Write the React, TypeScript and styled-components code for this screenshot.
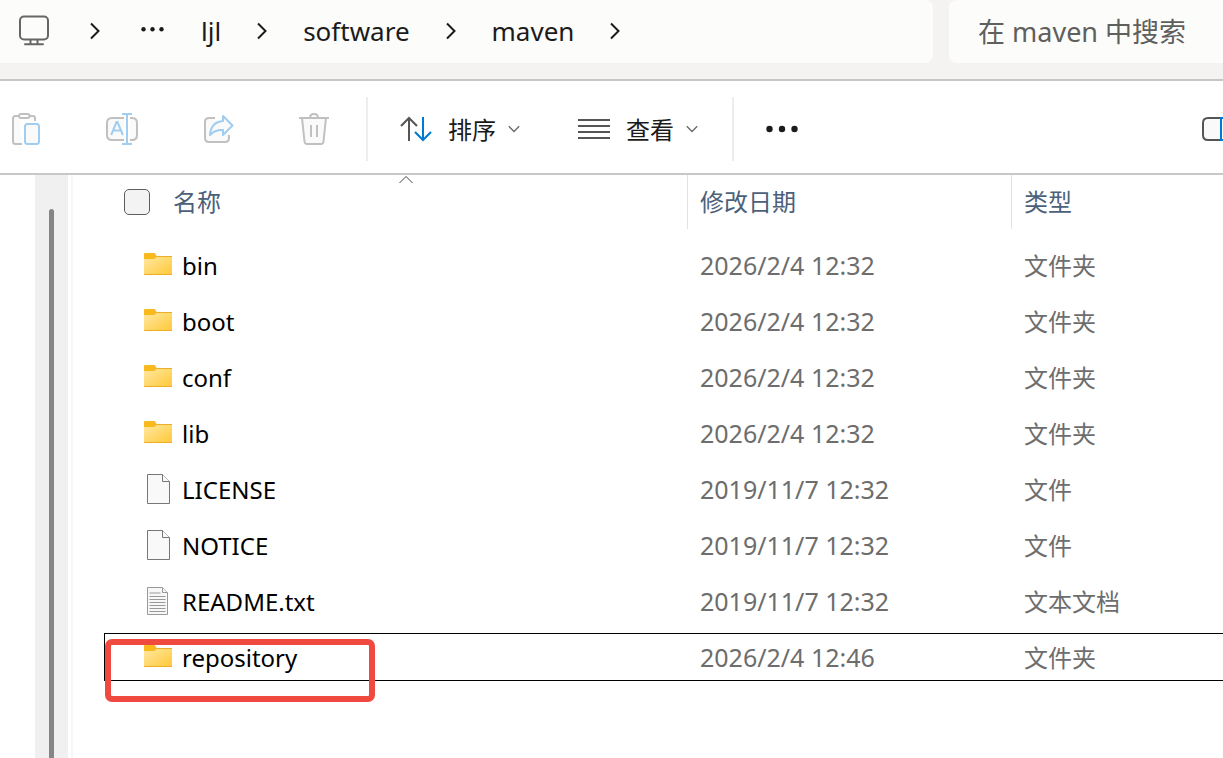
import React from "react";
import styled, { createGlobalStyle } from "styled-components";

const GlobalStyle = createGlobalStyle`
  *, *::before, *::after { box-sizing: border-box; }
  body {
    margin: 0;
    background: #fff;
    overflow: hidden;
    font-family: "Noto Sans", "Noto Sans CJK SC", sans-serif;
    color: #1b1b1b;
  }
`;

const Window = styled.div`
  min-height: 100vh;
  display: flex;
  flex-direction: column;
  overflow: hidden;
`;

const AddressRow = styled.header`
  display: flex;
  gap: 16px;
  padding-bottom: 16px;
  background: #f4f3f2;
  border-bottom: 2px solid #c8c6c5;
`;

const Breadcrumbs = styled.nav`
  flex: 1;
  height: 63px;
  display: flex;
  align-items: center;
  gap: 36px;
  padding: 0 0 2px 18px;
  background: #fcfcfa;
  border-radius: 0 8px 8px 0;
  svg { display: block; flex: none; }
`;

const Crumb = styled.a`
  font-size: 26px;
  line-height: 36px;
  color: #1b1b1b;
  text-decoration: none;
`;

const CrumbButton = styled.button<{ $left?: number; $right?: number }>`
  border: 0;
  background: none;
  padding: 0 ${(p) => p.$right ?? 0}px 0 ${(p) => p.$left ?? 0}px;
`;

const SearchBox = styled.input`
  width: 274px;
  height: 63px;
  padding: 0 0 0 29px;
  border: 0;
  border-radius: 8px 0 0 8px;
  background: #fcfcfa;
  font: inherit;
  font-size: 27px;
  outline: none;
  &::placeholder { color: #5f5f5e; opacity: 1; }
`;

const Toolbar = styled.div`
  display: flex;
  align-items: center;
  padding: 16px 0 12px 10px;
  border-bottom: 2px solid #c8c8c8;
`;

const ToolGroup = styled.div<{ $gap: number; $end?: number }>`
  display: flex;
  align-items: center;
  gap: ${(p) => p.$gap}px;
  padding-right: ${(p) => p.$end ?? 0}px;
`;

const ToolButton = styled.button`
  display: flex;
  align-items: center;
  padding: 0;
  border: 0;
  background: none;
  font: inherit;
  font-size: 24px;
  line-height: 32px;
  color: #1b1b1b;
  svg { display: block; }
`;

const ToolLabel = styled.span`
  padding: 2px 12px 0 16px;
`;

const Divider = styled.div`
  width: 2px;
  height: 64px;
  margin: 0 32px 0 34px;
  background: #ededed;
`;

const Spacer = styled.div`
  flex: 1;
`;

const Body = styled.main`
  flex: 1;
  display: flex;
`;

const ScrollTrack = styled.div`
  width: 33px;
  margin: 0 3px 0 35px;
  padding: 34px 14px 0;
  display: flex;
  background: #f0f0f0;
`;

const ScrollThumb = styled.div`
  width: 5px;
  border-radius: 3px 3px 0 0;
  background: #858585;
`;

const ListPane = styled.section`
  flex: 1;
  padding-left: 31px;
  border-left: 2px solid #f7f7f7;
`;

const FileTable = styled.table`
  display: block;
  thead { display: block; }
`;

const FileRows = styled.tbody`
  display: flex;
  flex-direction: column;
  gap: 8px;
  padding-top: 12px;
`;

const HeadRow = styled.tr`
  display: grid;
  grid-template-columns: 583px 324px 1fr;
  height: 54px;
`;

const HeadCell = styled.th<{ $first?: boolean }>`
  position: relative;
  display: flex;
  align-items: center;
  gap: 23px;
  padding: 0 0 0 ${(p) => (p.$first ? 20 : 12)}px;
  border-left: ${(p) => (p.$first ? "0" : "1px solid #e2e2e2")};
  font-size: 24px;
  font-weight: 400;
  line-height: 32px;
  color: #4c607a;
`;

const SortCaret = styled.svg`
  position: absolute;
  top: 0;
  left: calc(50% + 2px);
`;

const SelectAll = styled.input`
  appearance: none;
  width: 26px;
  height: 26px;
  margin: 0;
  border: 1px solid #5e5e5e;
  border-radius: 5px;
  background: #f3f3f3;
`;

const FileRow = styled.tr<{ $focused?: boolean }>`
  display: grid;
  grid-template-columns: 582px 324px 1fr;
  height: 48px;
  border: 1px solid ${(p) => (p.$focused ? "#000" : "transparent")};
  border-right: 0;
`;

const NameCell = styled.td`
  position: relative;
  display: flex;
  align-items: center;
  gap: 10px;
  padding: 0 0 0 39px;
  font-size: 24px;
  line-height: 32px;
  color: #000;
  svg { display: block; flex: none; }
`;

const FileName = styled.span`
  padding-top: 2px;
`;

const DateCell = styled.td`
  display: flex;
  align-items: center;
  padding: 0 0 0 13px;
  font-size: 25px;
  line-height: 32px;
  color: #6d6d6d;
`;

const TypeCell = styled(DateCell)`
  padding-top: 2px;
  font-size: 24px;
`;

const Highlight = styled.div`
  position: absolute;
  top: 5px;
  left: 0;
  width: 270px;
  height: 63px;
  border: 6px solid #f04a40;
  border-radius: 7px;
`;

const CrumbChevron = () => (
  <svg width="10" height="18" viewBox="0 0 10 18" fill="none" stroke="#1b1b1b" strokeWidth="2">
    <path d="M1 1.5 8.5 9 1 16.5" />
  </svg>
);

const DropChevron = () => (
  <svg width="12" height="8" viewBox="0 0 12 8" fill="none" stroke="#6a6a6a" strokeWidth="1.4">
    <path d="M.8 1.2 6 6.4l5.200-5.200" />
  </svg>
);

const MonitorIcon = () => (
  <svg width="32" height="32" viewBox="0 0 32 32" fill="none" stroke="#666" strokeWidth="2">
    <rect x="2" y="1.500" width="28" height="23" rx="4" />
    <path d="M12.500 25v4M19.500 25v4M7 29.200h18" strokeLinecap="round" />
  </svg>
);

const PathDots = () => (
  <svg width="24" height="8" viewBox="0 0 24 8" fill="#1b1b1b">
    <circle cx="2.500" cy="2.200" r="2.200" />
    <circle cx="11.500" cy="2.200" r="2.200" />
    <circle cx="20.500" cy="2.200" r="2.200" />
  </svg>
);

const PasteIcon = () => (
  <svg width="32" height="32" viewBox="0 0 32 32" fill="none" stroke="#c0c0c0" strokeWidth="2">
    <path d="M9 3H5.500Q3 3 3 5.500v23Q3 31 5.500 31H12M19 3h4q2 0 2 2v3" fill="#fafafa" />
    <rect x="9" y="1" width="10.500" height="4" rx="2" fill="#fff" />
    <rect x="15" y="11" width="14" height="20" rx="2.500" stroke="#a0cdf0" fill="#fafafa" />
  </svg>
);

const RenameIcon = () => (
  <svg width="32" height="32" viewBox="0 0 32 32" fill="none" stroke="#c0c0c0" strokeWidth="2">
    <path d="M18 5H6Q1 5 1 10v12q0 5 5 5h12" fill="#fafafa" />
    <path d="M24 5h2q5 0 5 5v12q0 5-5 5h-2" fill="#fafafa" />
    <path d="M16 1h10M16 31h10M21 1v30M5.200 22 10.500 9h1l5.300 13M7 17.500h8" stroke="#a0cdf0" />
  </svg>
);

const ShareIcon = () => (
  <svg width="32" height="32" viewBox="0 0 32 32" fill="none" stroke="#c0c0c0" strokeWidth="2" strokeLinejoin="round">
    <path d="M13 5H7Q3 5 3 9v16q0 4 4 4h16q4 0 4-4v-3" fill="#fafafa" />
    <path d="M21 3l9.500 9.500L21 22v-5q-8-.5-13 5Q9 9 21 8z" stroke="#a0cdf0" fill="#fafafa" />
  </svg>
);

const DeleteIcon = () => (
  <svg width="32" height="32" viewBox="0 0 32 32" fill="none" stroke="#c0c0c0" strokeWidth="2">
    <path d="M4 5l2.500 23.500Q6.800 31 9 31h14q2.200 0 2.500-2.500L28 5" fill="#fafafa" />
    <path d="M1 5h30M12 5q0-4 4-4t4 4M13 12v12M19 12v12" />
  </svg>
);

const SortIcon = () => (
  <svg width="32" height="32" viewBox="0 0 32 32" fill="none" strokeWidth="2">
    <path d="M9 28V5M1 13l8-8 8 8" stroke="#555" />
    <path d="M23 4v23M15 19l8 8 8-8" stroke="#0078d4" />
  </svg>
);

const ViewIcon = () => (
  <svg width="32" height="32" viewBox="0 0 32 32" stroke="#555" strokeWidth="2">
    <path d="M0 7h32M0 13h32M0 19h32M0 25h32" />
  </svg>
);

const MoreIcon = () => (
  <svg width="32" height="32" viewBox="0 0 32 32" fill="#1b1b1b">
    <circle cx="3.500" cy="16" r="3.200" />
    <circle cx="16" cy="16" r="3.200" />
    <circle cx="28.500" cy="16" r="3.200" />
  </svg>
);

const PreviewIcon = () => (
  <svg width="21" height="32" viewBox="0 0 21 32" fill="#fafafa" strokeWidth="2">
    <path d="M19 5H6Q1 5 1 10v12q0 5 5 5h13" stroke="#555" />
    <path d="M24 5h-5v22h5" stroke="#0078d4" />
  </svg>
);

const FolderIcon = () => (
  <svg width="28" height="24" viewBox="0 0 28 24">
    <defs>
      <linearGradient id="folder" x1="0" y1="0" x2="1" y2="1">
        <stop offset="0" stopColor="#ffe8a0" />
        <stop offset="1" stopColor="#ffc838" />
      </linearGradient>
    </defs>
    <path d="M0 1Q0 0 1 0h9q1 0 1.500 1l1 2H27q1 0 1 1v3H0z" fill="#f9b81c" />
    <path d="M0 6h10q1 0 1.500-1l.5-1h16v17q0 1-1 1H1q-1 0-1-1z" fill="url(#folder)" />
    <path d="M0 21.500h28M12 3.500h16" stroke="#eaae28" />
  </svg>
);

const FileIcon = () => (
  <svg width="28" height="32" viewBox="0 0 28 32" fill="#f9f9f9" stroke="#777">
    <path d="M3.500 1.500h15l7 7v22h-22z" />
    <path d="M18.500 1.500v7h7" />
  </svg>
);

const TextIcon = () => (
  <svg width="28" height="32" viewBox="0 0 28 32" fill="#f7f7f7" stroke="#999">
    <path d="M3.500 2.500h15l5 5v22h-20z" />
    <path d="M18.500 2.500v5h5M5.500 8h11M5.500 11.500h16M5.500 14.500h16M5.500 17.500h16M5.500 20.500h16M5.500 23.500h16M5.500 26.500h16" />
  </svg>
);

const icons = { folder: FolderIcon, file: FileIcon, text: TextIcon };

type Entry = { name: string; date: string; type: string; icon: keyof typeof icons; focused?: boolean };

const entries: Entry[] = [
  { name: "bin", date: "2026/2/4 12:32", type: "文件夹", icon: "folder" },
  { name: "boot", date: "2026/2/4 12:32", type: "文件夹", icon: "folder" },
  { name: "conf", date: "2026/2/4 12:32", type: "文件夹", icon: "folder" },
  { name: "lib", date: "2026/2/4 12:32", type: "文件夹", icon: "folder" },
  { name: "LICENSE", date: "2019/11/7 12:32", type: "文件", icon: "file" },
  { name: "NOTICE", date: "2019/11/7 12:32", type: "文件", icon: "file" },
  { name: "README.txt", date: "2019/11/7 12:32", type: "文本文档", icon: "text" },
  { name: "repository", date: "2026/2/4 12:46", type: "文件夹", icon: "folder", focused: true },
];

export default function App() {
  return (
    <Window>
      <GlobalStyle />
      <AddressRow>
        <Breadcrumbs aria-label="路径">
          <CrumbButton $right={4} aria-label="此电脑"><MonitorIcon /></CrumbButton>
          <CrumbChevron />
          <CrumbButton $left={5} aria-label="更多路径"><PathDots /></CrumbButton>
          <Crumb href="#ljl">ljl</Crumb>
          <CrumbChevron />
          <Crumb href="#software">software</Crumb>
          <CrumbChevron />
          <Crumb href="#maven">maven</Crumb>
          <CrumbChevron />
        </Breadcrumbs>
        <SearchBox type="text" placeholder="在 maven 中搜索" aria-label="在 maven 中搜索" />
      </AddressRow>

      <Toolbar>
        <ToolGroup $gap={64} $end={2}>
          <ToolButton aria-label="粘贴"><PasteIcon /></ToolButton>
          <ToolButton aria-label="重命名"><RenameIcon /></ToolButton>
          <ToolButton aria-label="共享"><ShareIcon /></ToolButton>
          <ToolButton aria-label="删除"><DeleteIcon /></ToolButton>
        </ToolGroup>
        <Divider />
        <ToolGroup $gap={58}>
          <ToolButton><SortIcon /><ToolLabel>排序</ToolLabel><DropChevron /></ToolButton>
          <ToolButton><ViewIcon /><ToolLabel>查看</ToolLabel><DropChevron /></ToolButton>
        </ToolGroup>
        <Divider />
        <ToolButton aria-label="更多"><MoreIcon /></ToolButton>
        <Spacer />
        <ToolButton aria-label="预览"><PreviewIcon /></ToolButton>
      </Toolbar>

      <Body>
        <ScrollTrack><ScrollThumb /></ScrollTrack>
        <ListPane>
          <FileTable>
            <thead>
              <HeadRow>
                <HeadCell $first>
                  <SelectAll type="checkbox" aria-label="全选" />
                  名称
                  <SortCaret width="16" height="10" viewBox="0 0 16 10" fill="none" stroke="#444">
                    <path d="M1.500 8 8 1.500 14.500 8" />
                  </SortCaret>
                </HeadCell>
                <HeadCell>修改日期</HeadCell>
                <HeadCell>类型</HeadCell>
              </HeadRow>
            </thead>
            <FileRows>
              {entries.map((e) => {
                const Icon = icons[e.icon];
                return (
                  <FileRow key={e.name} $focused={e.focused}>
                    <NameCell>
                      <Icon />
                      <FileName>{e.name}</FileName>
                      {e.focused && <Highlight />}
                    </NameCell>
                    <DateCell>{e.date}</DateCell>
                    <TypeCell>{e.type}</TypeCell>
                  </FileRow>
                );
              })}
            </FileRows>
          </FileTable>
        </ListPane>
      </Body>
    </Window>
  );
}
